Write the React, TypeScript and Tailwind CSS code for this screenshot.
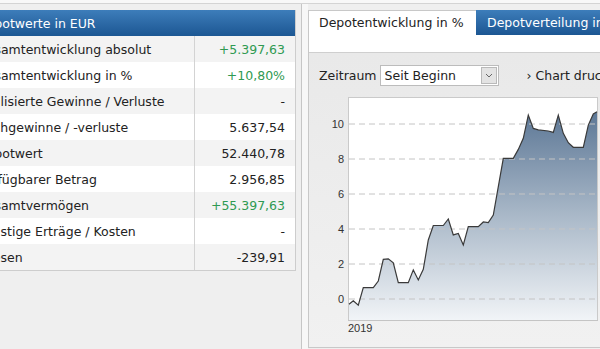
const rows = [
  { label: "Gesamtentwicklung absolut", value: "+5.397,63", green: true },
  { label: "Gesamtentwicklung in %", value: "+10,80%", green: true },
  { label: "Realisierte Gewinne / Verluste", value: "-", green: false },
  { label: "Buchgewinne / -verluste", value: "5.637,54", green: false },
  { label: "Depotwert", value: "52.440,78", green: false },
  { label: "Verfügbarer Betrag", value: "2.956,85", green: false },
  { label: "Gesamtvermögen", value: "+55.397,63", green: true },
  { label: "Sonstige Erträge / Kosten", value: "-", green: false },
  { label: "Spesen", value: "-239,91", green: false },
];

// [page x, percent]
const points: [number, number][] = [
  [349, -0.3], [353.3, -0.1], [358.3, -0.35], [363.3, 0.65], [373.3, 0.65],
  [378.3, 1.03], [383.3, 2.27], [388.3, 2.3], [393.3, 2.07], [398.3, 0.93],
  [408.3, 0.93], [413.3, 1.66], [418.3, 1.09], [423.3, 1.7], [428.3, 3.37],
  [433.3, 4.2], [443.3, 4.2], [448.3, 4.57], [453.3, 3.66], [458.3, 3.75],
  [463.3, 3.09], [468.3, 4.13], [478.3, 4.13], [483.3, 4.4], [488.3, 4.36],
  [493.3, 4.8], [503.3, 8.04], [513.3, 8.04], [518.3, 8.55], [523.3, 9.18],
  [528.3, 10.51], [533.3, 9.75], [538.3, 9.66], [548.3, 9.6], [553.3, 9.52],
  [558.3, 10.51], [563.3, 9.47], [568.3, 8.93], [573.3, 8.67], [583.3, 8.67],
  [588.3, 9.94], [593.3, 10.57], [597, 10.7],
];

const toY = (v: number) => 299 - v * 17.5;
const ticks = [0, 2, 4, 6, 8, 10];

function Chart() {
  const line = points.map(([x, v]) => `${x},${toY(v).toFixed(1)}`).join(" ");
  const area = `349,320 ${line} 597,320`;
  return (
    <svg width={300} height={255} viewBox="309 92 300 255" className="block">
      <defs>
        <linearGradient id="fill" x1="0" y1="110" x2="0" y2="320" gradientUnits="userSpaceOnUse">
          <stop offset="0" stopColor="#5b7695" />
          <stop offset="0.5" stopColor="#a9b8c8" />
          <stop offset="1" stopColor="#f1f4f7" />
        </linearGradient>
      </defs>
      <rect x={348.5} y={97.5} width={249} height={223} fill="#ffffff" stroke="#cacaca" />
      <polygon points={area} fill="url(#fill)" />
      {ticks.map((t) => (
        <line
          key={t}
          x1={349}
          x2={597}
          y1={toY(t)}
          y2={toY(t)}
          stroke="#c4c4c4"
          strokeDasharray="6 4"
        />
      ))}
      <polyline points={line} fill="none" stroke="#3a3a3a" strokeWidth={1.2} />
      <line x1={348} x2={598} y1={320.5} y2={320.5} stroke="#c4c4c4" />
      {ticks.map((t) => (
        <text
          key={t}
          x={344}
          y={toY(t) + 4}
          textAnchor="end"
          fontSize={11}
          fill="#333"
          fontFamily="'Liberation Sans', Arial, sans-serif"
        >
          {t}
        </text>
      ))}
      <text x={348} y={332} fontSize={11} fill="#333" fontFamily="'Liberation Sans', Arial, sans-serif">
        2019
      </text>
    </svg>
  );
}

export default function App() {
  return (
    <div className="w-[600px] h-[349px] overflow-hidden bg-[#efefef] text-[12.5px] leading-[15px] text-[#222] font-['DejaVu_Sans','Verdana',sans-serif]">
      <div className="h-[4px] bg-[#f8f8f8] border-b border-[#d4d4d4]" />
      <div className="flex h-[345px]">
        {/* Depotwerte table */}
        <div className="w-[302px] shrink-0 overflow-hidden border-r border-[#c6c6c6] pt-[6px]">
          <div className="ml-[-30px] w-[326px] border-r border-b border-[#cdcdcd]">
            <div className="h-[26px] flex items-center pl-[7px] text-white bg-gradient-to-b from-[#3d7dba] to-[#1c5793]">
              Depotwerte in EUR
            </div>
            {rows.map((r, i) => (
              <div
                key={r.label}
                className={`flex h-[26px] ${i % 2 === 0 ? "bg-[#f3f3f3]" : "bg-white"}`}
              >
                <div className="w-[225px] flex items-center pl-[7px] border-r border-[#d3d3d3] whitespace-nowrap">
                  {r.label}
                </div>
                <div
                  className={`flex-1 flex items-center justify-end pr-[10px] ${
                    r.green ? "text-[#2f9a52]" : ""
                  }`}
                >
                  {r.value}
                </div>
              </div>
            ))}
          </div>
        </div>

        <div className="w-[6px] shrink-0 bg-[#f7f7f7]" />

        {/* Chart panel */}
        <div className="pt-[6px]">
          <div className="w-[330px] border-l border-b border-[#c8c8c8]">
            <div className="h-[43px] flex bg-white border-b border-[#cfcfcf]">
              <div className="w-[167px] border-t border-[#c8c8c8] pt-[4px] pl-[10px] whitespace-nowrap">
                Depotentwicklung in %
              </div>
              <div className="flex-1 h-[25px] pt-[5px] pl-[11px] text-white whitespace-nowrap bg-gradient-to-b from-[#3d7dba] to-[#1c5793]">
                Depotverteilung in %
              </div>
            </div>
            <div className="h-[294px] pt-[12px] bg-gradient-to-b from-[#e9e9e9] to-[#f1f1f1]">
              <div className="flex items-center h-[21px] pl-[10px] whitespace-nowrap">
                <span>Zeitraum</span>
                <div className="ml-[3px] w-[119px] h-[21px] flex border border-[#bcbcbc] bg-white">
                  <span className="flex-1 pl-[4px] flex items-center">Seit Beginn</span>
                  <div className="w-[16px] m-[1px] bg-[#e3e3e3] border border-[#b9b9b9] flex items-center justify-center">
                    <svg width="8" height="5" viewBox="0 0 8 5">
                      <path d="M1 1 L4 4 L7 1" fill="none" stroke="#666" strokeWidth="1" />
                    </svg>
                  </div>
                </div>
                <span className="ml-[28px]">›&nbsp;Chart drucken</span>
              </div>
              <div className="mt-[6px]">
                <Chart />
              </div>
            </div>
          </div>
        </div>
      </div>
    </div>
  );
}
